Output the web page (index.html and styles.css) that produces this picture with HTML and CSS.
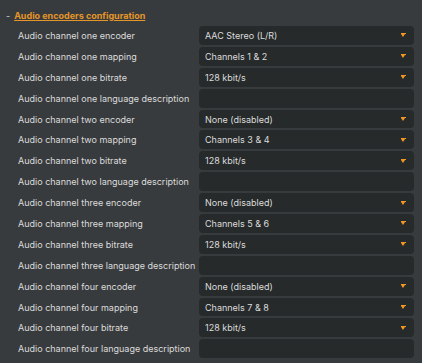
FILE: index.html
```html
<!DOCTYPE html>
<html lang="en">

<head>
    <meta charset="UTF-8" />
    <meta name="viewport" content="width=device-width, initial-scale=1.0" />
    <title>Audio encoders</title>
    <link rel="stylesheet" href="styles.css">
</head>

<body>
    <div class="section">
        <div class="section-title">
            <span class="toggle">-</span>
            <a href="#" class="title-link">Audio encoders configuration</a>
        </div>
        <div class="form">
            <label>Audio channel one encoder</label>
            <div class="select">AAC Stereo (L/R)<span class="arrow"></span></div>
            <label>Audio channel one mapping</label>
            <div class="select">Channels 1 &amp; 2<span class="arrow"></span></div>
            <label>Audio channel one bitrate</label>
            <div class="select">128 kbit/s<span class="arrow"></span></div>
            <label>Audio channel one language description</label>
            <input type="text" class="text" />

            <label>Audio channel two encoder</label>
            <div class="select">None (disabled)<span class="arrow"></span></div>
            <label>Audio channel two mapping</label>
            <div class="select">Channels 3 &amp; 4<span class="arrow"></span></div>
            <label>Audio channel two bitrate</label>
            <div class="select">128 kbit/s<span class="arrow"></span></div>
            <label>Audio channel two language description</label>
            <input type="text" class="text" />

            <label>Audio channel three encoder</label>
            <div class="select">None (disabled)<span class="arrow"></span></div>
            <label>Audio channel three mapping</label>
            <div class="select">Channels 5 &amp; 6<span class="arrow"></span></div>
            <label>Audio channel three bitrate</label>
            <div class="select">128 kbit/s<span class="arrow"></span></div>
            <label>Audio channel three language description</label>
            <input type="text" class="text" />

            <label>Audio channel four encoder</label>
            <div class="select">None (disabled)<span class="arrow"></span></div>
            <label>Audio channel four mapping</label>
            <div class="select">Channels 7 &amp; 8<span class="arrow"></span></div>
            <label>Audio channel four bitrate</label>
            <div class="select">128 kbit/s<span class="arrow"></span></div>
            <label>Audio channel four language description</label>
            <input type="text" class="text" />
        </div>
    </div>
</body>

</html>
```

FILE: styles.css
```css
body {
    margin: 0;
    background-color: #383b3d;
    font-family: Inter, "Noto Sans", sans-serif;
    font-size: 9px;
    color: #dcdcdc;
}

.section {
    padding: 8px 8px 0 6px;
}

.section-title {
    display: flex;
    align-items: center;
    gap: 4px;
    height: 14px;
    font-size: 9px;
}

.toggle {
    color: #cfcfcf;
}

.title-link {
    color: #e5962a;
    font-weight: bold;
    text-decoration: underline;
}

.form {
    display: grid;
    grid-template-columns: 181px 1fr;
    grid-auto-rows: 18.9px;
    row-gap: 2px;
    margin-top: 4px;
    padding-left: 12px;
}

.form label {
    display: flex;
    align-items: center;
    white-space: nowrap;
}

.select,
.text {
    position: relative;
    display: flex;
    align-items: center;
    box-sizing: border-box;
    height: 100%;
    width: 100%;
    margin: 0;
    padding: 0 6px;
    border: none;
    border-radius: 4px;
    background-color: #262a2b;
    color: #dcdcdc;
    font: inherit;
}

.arrow {
    position: absolute;
    right: 8px;
    top: 50%;
    width: 5px;
    height: 4px;
    margin-top: -2px;
    background: linear-gradient(#f2981f, #f2981f) top / 5px 1px no-repeat;
}

.arrow::after {
    content: "";
    position: absolute;
    left: 0;
    top: 1px;
    border-left: 2.5px solid transparent;
    border-right: 2.5px solid transparent;
    border-top: 3px solid #f2981f;
}
```
